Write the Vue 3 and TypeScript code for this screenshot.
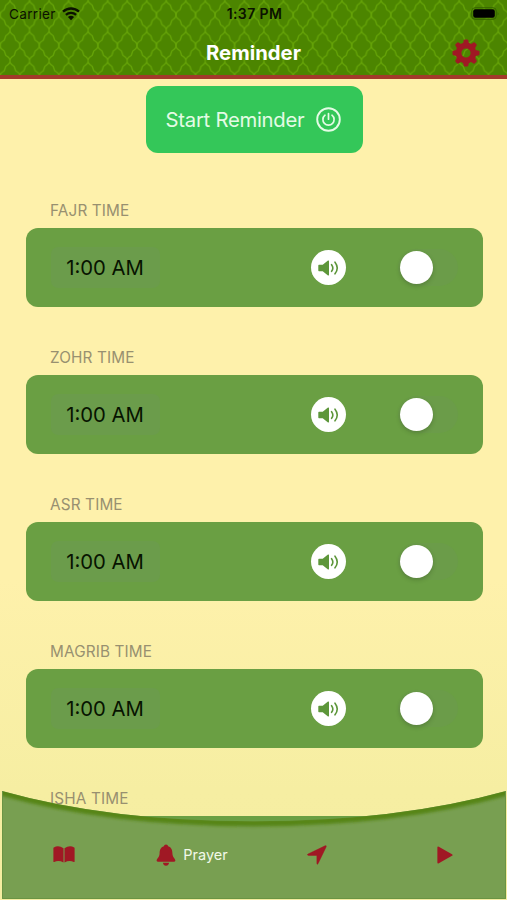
<script setup lang="ts">
import { ref } from 'vue'

interface Reminder {
  name: string
  time: string
  enabled: boolean
}

const reminders = ref<Reminder[]>([
  { name: 'FAJR TIME', time: '1:00 AM', enabled: false },
  { name: 'ZOHR TIME', time: '1:00 AM', enabled: false },
  { name: 'ASR TIME', time: '1:00 AM', enabled: false },
  { name: 'MAGRIB TIME', time: '1:00 AM', enabled: false },
  { name: 'ISHA TIME', time: '1:00 AM', enabled: false },
])

const gearTeeth = [0, 45, 90, 135, 180, 225, 270, 315]
</script>

<template>
  <div class="screen">
    <header class="header">
      <svg class="lattice" width="507" height="75" aria-hidden="true">
        <defs>
          <pattern id="lattice" width="19.53" height="30.6" patternUnits="userSpaceOnUse" patternTransform="translate(10 -.3)">
            <g fill="none" stroke="#65a307" stroke-width="1.3">
              <path d="M0 0V1.2C.3 2.8 2 4.2 4.1 5.4L5.66 9.9C7.76 11.1 9.46 12.5 9.76 14.1V16.5C9.46 18.1 7.76 19.5 5.66 20.7L4.1 25.2C2 26.4 .3 27.8 0 29.4V30.6" />
              <path d="M19.53 0V1.2C19.23 2.8 17.5 4.2 15.4 5.4L13.86 9.9C11.76 11.1 10.06 12.5 9.76 14.1V16.5C10.06 18.1 11.76 19.5 13.86 20.7L15.4 25.2C17.5 26.4 19.23 27.8 19.53 29.4V30.6" />
            </g>
          </pattern>
        </defs>
        <rect width="507" height="75" fill="url(#lattice)" />
      </svg>
      <div class="status">
        <div class="carrier">
          <span>Carrier</span>
          <svg width="18" height="14" viewBox="0 0 18 14">
            <g fill="none" stroke="#0b1200" stroke-width="2.3">
              <path d="M1 4.7C5.5.4 12.5.4 17 4.7" />
              <path d="M3.9 7.9C6.8 5.2 11.2 5.2 14.1 7.9" />
            </g>
            <path d="M5.9 10.1Q9 7.5 12.1 10.1L9 13.2Z" fill="#0b1200" />
          </svg>
        </div>
        <span class="clock">1:37 PM</span>
        <svg class="battery" width="29" height="13" viewBox="0 0 29 13">
          <rect x=".7" y=".7" width="24.6" height="11.6" rx="3.4" fill="none" stroke="#376500" stroke-width="1" />
          <rect x="2.2" y="2.2" width="21.6" height="8.6" rx="2.2" fill="#000" />
          <path d="M26.6 4.5q1.7 2 0 4z" fill="#376500" />
        </svg>
      </div>
      <div class="titlebar">
        <h1>Reminder</h1>
        <svg class="gear" width="28" height="28" viewBox="-14 -14 28 28">
          <circle r="7.5" fill="none" stroke="#a01824" stroke-width="5.8" />
          <path v-for="angle in gearTeeth" :key="angle" d="M-3-9.5L-2.2-12.8Q-2-13.5-1.3-13.5H1.3Q2-13.5 2.2-12.8L3-9.5Z" fill="#a01824" :transform="`rotate(${angle})`" />
        </svg>
      </div>
    </header>

    <main class="content">
      <button class="start" type="button">
        <span>Start Reminder</span>
        <svg width="25" height="25" viewBox="0 0 25 25" fill="none" stroke="#e4fbe5" stroke-linecap="round">
          <circle cx="12.5" cy="12.5" r="11.3" stroke-width="1.9" />
          <path d="M9 8.2a5.6 5.6 0 1 0 7 0M12.5 6.6v5.6" stroke-width="1.7" />
        </svg>
      </button>

      <section v-for="item in reminders" :key="item.name" class="reminder">
        <h2>{{ item.name }}</h2>
        <div class="card">
          <span class="time">{{ item.time }}</span>
          <button class="sound" type="button" aria-label="Sound">
            <svg width="21" height="16" viewBox="0 0 21 16">
              <path d="M1 4.7h3.7L10 .6q1-.6 1 .6v13.6q0 1.2-1 .6L4.7 11.3H1Q.3 11.3.3 10.6V5.4Q.3 4.7 1 4.7Z" fill="#5d963a" />
              <path d="M13.6 4.7q2.5 3.3 0 6.6M17 2.2q4.5 5.8 0 11.6" fill="none" stroke="#5d963a" stroke-width="1.6" stroke-linecap="round" />
            </svg>
          </button>
          <button class="switch" :class="{ on: item.enabled }" type="button" aria-label="Toggle" @click="item.enabled = !item.enabled">
            <span class="knob"></span>
          </button>
        </div>
      </section>
    </main>

    <nav class="tabs">
      <svg class="tabs-shape" width="507" height="109" viewBox="0 0 507 109" aria-hidden="true">
        <defs>
          <clipPath id="bar"><path d="M2 0Q110 30.3 253.5 30.3T506 0V108H2Z" /></clipPath>
          <filter id="soft" x="-5%" y="-30%" width="110%" height="160%"><feGaussianBlur stdDeviation="1.7" /></filter>
        </defs>
        <path d="M2 0Q110 30.3 253.5 30.3T506 0V108H2Z" fill="#789f51" />
        <g clip-path="url(#bar)">
          <path d="M0 1Q110 32 253.5 32T508 1" fill="none" stroke="#568516" stroke-width="7" filter="url(#soft)" />
          <path d="M2.5 0V107.5H505.5V0" fill="none" stroke="#6a9444" stroke-width="1" />
        </g>
      </svg>
      <a class="tab book">
        <svg width="22" height="17" viewBox="0 0 22 17" fill="#a01824">
          <path d="M10.5 2.2Q5.5-1.2.8 1.4Q.4 1.7.4 2.2V15.5Q.4 16.4 1.2 16Q5.6 14 10.5 16.4Z" />
          <path d="M11.5 2.2Q16.5-1.2 21.2 1.4Q21.6 1.7 21.6 2.2V15.5Q21.6 16.4 20.8 16Q16.4 14 11.5 16.4Z" />
        </svg>
      </a>
      <a class="tab prayer">
        <svg width="20" height="22" viewBox="0 0 20 22" fill="#a01824">
          <path d="M10 .4Q12 .4 12.1 2.3C15.6 3.4 16.3 6.2 16.4 9.2C16.5 13.4 19.4 14.6 19.4 16.6Q19.4 17.7 18.2 17.7H1.8Q.6 17.7.6 16.6C.6 14.6 3.5 13.4 3.6 9.2C3.7 6.2 4.4 3.4 7.9 2.3Q8 .4 10 .4ZM6.9 18.8h6.2Q12.5 21.8 10 21.8T6.9 18.8Z" />
        </svg>
        <span>Prayer</span>
      </a>
      <a class="tab compass">
        <svg width="20" height="20" viewBox="0 0 20 20"><path d="M1 9.1L18.1.8Q19.7.2 19.1 1.9L11 18.7Q10 20 9.9 18.3V10.4H1.4Q-.4 9.9 1 9.1Z" fill="#a01824" stroke="#a01824" stroke-width=".5" /></svg>
      </a>
      <a class="tab play">
        <svg width="16" height="18" viewBox="0 0 16 18"><path d="M.4 1.4Q.4 0 1.8.7L15 8.2Q16.3 9 15 9.8L1.8 17.3Q.4 18 .4 16.6Z" fill="#a01824" /></svg>
      </a>
    </nav>
  </div>
</template>

<style>
body {
  margin: 0;
}
</style>

<style scoped>
.screen {
  position: relative;
  width: 507px;
  height: 900px;
  overflow: hidden;
  background: linear-gradient(#fef1ab 0, #fef1ab 580px, #f6eea2 790px, #f5eda1 100%);
  font-family: Inter, "Liberation Sans", sans-serif;
}

button {
  border: 0;
  padding: 0;
  font: inherit;
}

.header {
  position: relative;
  box-sizing: border-box;
  height: 79px;
  border-bottom: 4px solid #a23a2a;
  background: #4c8500;
}

.lattice {
  position: absolute;
  left: 0;
  top: 0;
}

.status {
  position: relative;
  display: grid;
  grid-template-columns: 1fr auto 1fr;
  align-items: center;
  height: 27px;
  padding: 0 7px 0 9px;
  color: #0b1200;
  font-size: 13.6px;
}

.carrier {
  display: flex;
  align-items: center;
  gap: 6px;
  letter-spacing: 0.3px;
}

.clock {
  font-weight: 600;
  font-size: 14px;
  letter-spacing: 0.4px;
}

.battery {
  justify-self: end;
}

.titlebar {
  position: relative;
  display: grid;
  grid-template-columns: 1fr auto 1fr;
  align-items: center;
  height: 51px;
  padding: 0 27px;
}

h1 {
  grid-column: 2;
  margin: 0;
  color: #fff;
  font-size: 20.3px;
  font-weight: 700;
  letter-spacing: 0;
}

.gear {
  justify-self: end;
}

.content {
  display: flex;
  flex-direction: column;
  padding: 7px 24.5px 0 25.5px;
}

.start {
  display: flex;
  align-items: center;
  justify-content: center;
  gap: 12px;
  align-self: center;
  box-sizing: border-box;
  width: 217px;
  height: 67px;
  padding-right: 1px;
  margin-bottom: 46px;
  border-radius: 12px;
  background: #34c759;
  color: #e4fbe5;
  font-size: 20.3px;
  letter-spacing: -0.27px;
}

.reminder {
  height: 147px;
}

h2 {
  margin: 0;
  padding: 0 24.5px;
  height: 29px;
  color: #989070;
  font-size: 15.3px;
  line-height: 23px;
  font-weight: 400;
  letter-spacing: 0.15px;
}

.card {
  display: flex;
  align-items: center;
  box-sizing: border-box;
  width: 457px;
  height: 79px;
  padding: 0 24.2px 0 25px;
  border-radius: 12px;
  background: #6a9f43;
}

.time {
  width: 109px;
  height: 41px;
  border-radius: 7px;
  background: #6b9c4b;
  color: #071300;
  font-size: 20.3px;
  line-height: 41px;
  text-align: center;
}

.sound {
  display: flex;
  align-items: center;
  justify-content: center;
  width: 35px;
  height: 35px;
  margin-left: 151.5px;
  border-radius: 50%;
  background: #fff;
}

.switch {
  width: 60px;
  height: 37px;
  margin-left: auto;
  padding: 2px;
  border-radius: 19px;
  background: #6b9c49;
}

.switch.on {
  background: #34c759;
}

.knob {
  display: block;
  width: 33px;
  height: 33px;
  border-radius: 50%;
  background: #fff;
  box-shadow: 0 2px 4px rgba(30, 50, 20, 0.25);
}

.switch.on .knob {
  margin-left: auto;
}

.tabs {
  position: absolute;
  left: 0;
  bottom: 0;
  display: grid;
  grid-template-columns: 128px 128px 126px 125px;
  align-items: center;
  box-sizing: border-box;
  width: 507px;
  height: 109px;
  padding-top: 18px;
}

.tabs-shape {
  position: absolute;
  left: 0;
  top: 0;
}

.tab {
  position: relative;
  display: flex;
  align-items: center;
  justify-content: center;
  color: #f2f9e9;
  font-size: 14.5px;
}

.prayer {
  gap: 7px;
}

.compass {
  padding-right: 4px;
}
</style>
